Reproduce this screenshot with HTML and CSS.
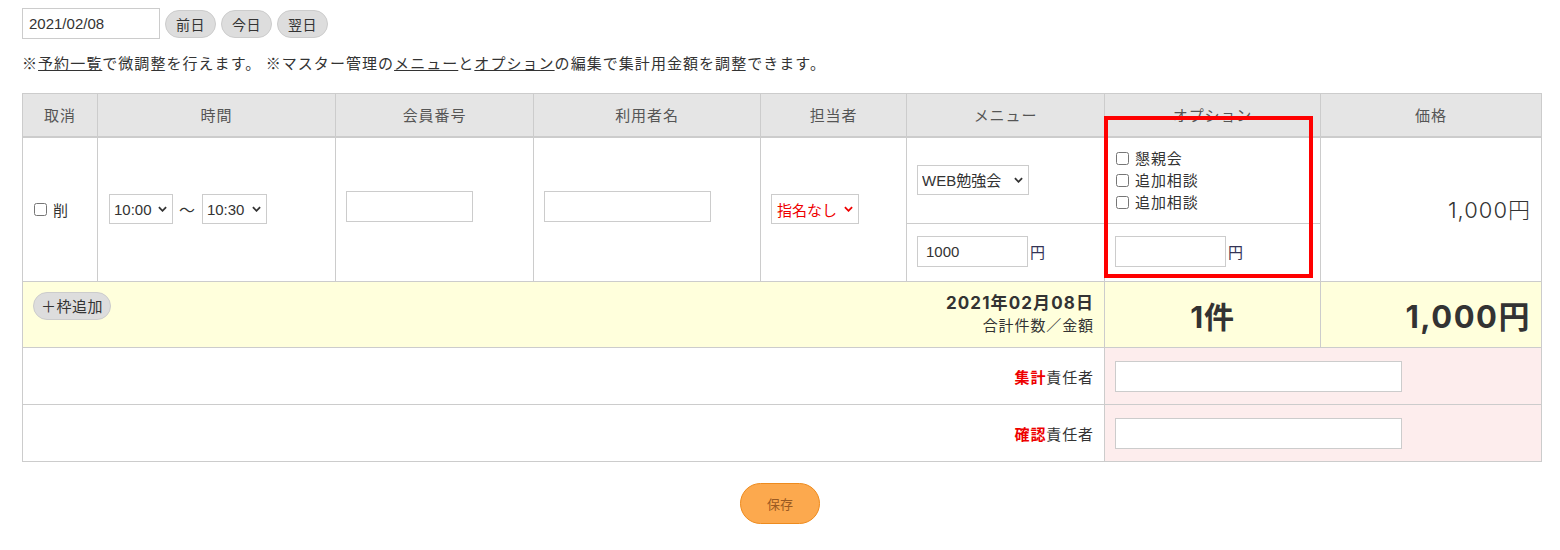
FILE: index.html
```html
<!DOCTYPE html>
<html lang="ja">
<head>
<meta charset="utf-8">
<link rel="stylesheet" href="styles.css">
</head>
<body>
<div class="topbar">
  <input class="date-input" type="text" value="2021/02/08">
  <button class="pill">前日</button>
  <button class="pill">今日</button>
  <button class="pill">翌日</button>
</div>
<p class="note">※<a href="#">予約一覧</a>で微調整を行えます。 ※マスター管理の<a href="#">メニュー</a>と<a href="#">オプション</a>の編集で集計用金額を調整できます。</p>

<div class="table-wrap">
<table class="grid">
  <colgroup>
    <col style="width:75px"><col style="width:238px"><col style="width:198px"><col style="width:227px">
    <col style="width:146px"><col style="width:198px"><col style="width:216px"><col style="width:221px">
  </colgroup>
  <thead>
    <tr class="head">
      <th>取消</th><th>時間</th><th>会員番号</th><th>利用者名</th><th>担当者</th><th>メニュー</th><th>オプション</th><th>価格</th>
    </tr>
  </thead>
  <tbody>
    <tr class="row-a">
      <td rowspan="2" class="c-cancel"><label class="chk"><input type="checkbox">削</label></td>
      <td rowspan="2" class="c-time">
        <div class="time">
          <span class="sel w64"><select><option>10:00</option></select><svg class="chev" viewBox="0 0 10 6"><path d="M1 1l4 4 4-4" fill="none" stroke="#333" stroke-width="2"/></svg></span>
          <span class="tilde">〜</span>
          <span class="sel w65"><select><option>10:30</option></select><svg class="chev" viewBox="0 0 10 6"><path d="M1 1l4 4 4-4" fill="none" stroke="#333" stroke-width="2"/></svg></span>
        </div>
      </td>
      <td rowspan="2" class="c-pad"><input class="txt w127 up" type="text"></td>
      <td rowspan="2" class="c-pad"><input class="txt w167 up" type="text"></td>
      <td rowspan="2" class="c-pad"><span class="sel w88 red"><select><option>指名なし</option></select><svg class="chev" viewBox="0 0 10 6"><path d="M1 1l4 4 4-4" fill="none" stroke="#e00" stroke-width="2"/></svg></span></td>
      <td class="c-pad"><span class="sel w112"><select><option>WEB勉強会</option></select><svg class="chev" viewBox="0 0 10 6"><path d="M1 1l4 4 4-4" fill="none" stroke="#333" stroke-width="2"/></svg></span></td>
      <td class="c-opts">
        <label class="chk opt"><input type="checkbox">懇親会</label>
        <label class="chk opt"><input type="checkbox">追加相談</label>
        <label class="chk opt"><input type="checkbox">追加相談</label>
      </td>
      <td rowspan="2" class="c-price">1,000円</td>
    </tr>
    <tr class="row-b">
      <td class="c-pad"><div class="amount"><input class="txt w111" type="text" value="1000"><span class="yen">円</span></div></td>
      <td class="c-pad"><div class="amount"><input class="txt w111" type="text"><span class="yen">円</span></div></td>
    </tr>
    <tr class="sum">
      <td colspan="6" class="sum-left">
        <div class="sum-inner">
          <button class="pill add">＋枠追加</button>
          <div class="sum-date">
            <div class="d">2021年02月08日</div>
            <div class="s">合計件数／金額</div>
          </div>
        </div>
      </td>
      <td class="sum-count">1件</td>
      <td class="sum-price">1,000円</td>
    </tr>
    <tr class="resp">
      <td colspan="6" class="resp-label"><b class="red-b">集計</b>責任者</td>
      <td colspan="2" class="resp-in"><input class="txt w287" type="text"></td>
    </tr>
    <tr class="resp">
      <td colspan="6" class="resp-label"><b class="red-b">確認</b>責任者</td>
      <td colspan="2" class="resp-in"><input class="txt w287" type="text"></td>
    </tr>
  </tbody>
</table>
<div class="highlight"></div>
</div>

<div class="actions"><button class="save">保存</button></div>
</body>
</html>
```

FILE: styles.css
```css
* { box-sizing: border-box; }
html, body { background: #fff; }
body {
  margin: 0;
  padding: 8px 22px 0;
  font-family: "Noto Sans CJK JP", "Liberation Sans", sans-serif;
  font-size: 15px;
  letter-spacing: 0.9px;
  color: #333;
}
input, select, button { font-family: "Liberation Sans", "Noto Sans CJK JP", sans-serif; letter-spacing: 0; }

.topbar { display: flex; align-items: center; gap: 5px; height: 31px; }
.date-input {
  width: 138px; height: 31px; border: 1px solid #ccc; padding: 0 6px;
  font-size: 15px; color: #333; margin: 0;
}
.pill {
  height: 28px; padding: 0 11px; border: 1px solid #ccc; border-radius: 14px;
  background: #ddd; font-size: 14px; color: #333; cursor: pointer; margin: 0;
  font-family: "Noto Sans CJK JP", sans-serif; line-height: 26px; letter-spacing: 0.5px;
}
.topbar .pill { width: 51px; padding: 0; }

.note { margin: 14px 0 0; line-height: 20px; height: 20px; font-size: 15px; letter-spacing: 1.05px; }
.note a { color: #333; text-decoration: underline; }

.table-wrap { position: relative; margin-top: 20px; width: 1519px; }
.grid { width: 1519px; table-layout: fixed; border-collapse: collapse; }
.grid th, .grid td { border: 1px solid #ccc; padding: 0; }
.head th {
  height: 43px; background: #e5e5e5; font-weight: normal; color: #555; font-size: 15px;
  border-bottom: 2px solid #ccc;
}
.row-a td { height: 87px; }
.row-b td { height: 58px; }
.c-cancel { padding-left: 11px !important; }
.chk { display: inline-flex; align-items: center; gap: 6px; font-size: 15px; }
.chk input { margin: 0; width: 13px; height: 13px; }
.c-time { padding-left: 11px !important; }
.time { display: flex; align-items: center; gap: 6px; }
.tilde { font-size: 16px; }
.c-pad { padding-left: 10px !important; }

.sel { position: relative; display: inline-block; height: 30px; vertical-align: middle; }
.sel select {
  appearance: none; -webkit-appearance: none; width: 100%; height: 30px;
  border: 1px solid #ccc; background: #fff; font-size: 15px; color: #333;
  padding: 0 18px 0 4px; margin: 0; font-family: "Liberation Sans", "Noto Sans CJK JP", sans-serif;
}
.sel .chev { position: absolute; right: 6px; top: 12px; width: 9px; height: 6px; pointer-events: none; }
.sel.red select { color: #e00; font-family: "Noto Sans CJK JP", sans-serif; padding-left: 5px; }
.w64 { width: 64px; } .w65 { width: 65px; } .w88 { width: 88px; } .w112 { width: 112px; }

.txt { height: 31px; border: 1px solid #ccc; padding: 0 8px; font-size: 15px; color: #333; margin: 0; vertical-align: middle; background: #fff; }
.txt.up { position: relative; top: -3px; }
.w127 { width: 127px; } .w167 { width: 167px; } .w111 { width: 111px; } .w287 { width: 287px; }
.amount { display: flex; align-items: center; margin-top: -3px; }
.yen { margin-left: 2px; color: #335; font-size: 15px; }

.c-opts { padding-left: 11px !important; vertical-align: middle; }
.opt { display: flex; height: 22px; line-height: 22px; }

.c-price {
  text-align: right; padding-right: 10px !important; padding-bottom: 3px !important; font-size: 22px; font-weight: 300;
  font-family: "Inter", "Noto Sans CJK JP", sans-serif; color: #333; letter-spacing: 1px;
}

.sum td { height: 66px; background: #ffffdc; }
.sum-left { vertical-align: top; padding: 10px 10px 0 10px !important; }
.sum-inner { display: flex; justify-content: space-between; align-items: flex-start; }
.pill.add { height: 28px; padding: 0 7px; font-size: 15px; font-family: "Noto Sans CJK JP", sans-serif; }
.sum-date { text-align: right; }
.sum-date .d { font-size: 17px; font-weight: bold; line-height: 22px; font-family: "Inter", "Noto Sans CJK JP", sans-serif; letter-spacing: 1.1px; }
.sum-date .s { font-size: 15px; line-height: 22px; }
.sum-count { text-align: center; font-size: 30px; font-weight: bold; font-family: "Inter", "Noto Sans CJK JP", sans-serif; }
.sum-price { text-align: right; padding-right: 10px !important; font-size: 31px; font-weight: bold; font-family: "Inter", "Noto Sans CJK JP", sans-serif; letter-spacing: 1.5px; }

.resp td { height: 57px; }
.resp-label { text-align: right; padding-right: 10px !important; font-size: 15px; }
.red-b { color: #e00; font-weight: bold; }
.resp-in { background: #fdeded; padding-left: 10px !important; }

.highlight {
  position: absolute; left: 1082px; top: 23px; width: 209px; height: 162px;
  border: 4px solid #f00; pointer-events: none;
}

.actions { display: flex; justify-content: center; margin-top: 21px; }
.save {
  width: 80px; height: 41px; border-radius: 21px; background: #fca94e; border: 1px solid #ee8b1e;
  color: #9a5a22; font-size: 13px; font-family: "Noto Sans CJK JP", sans-serif; cursor: pointer;
}
```
